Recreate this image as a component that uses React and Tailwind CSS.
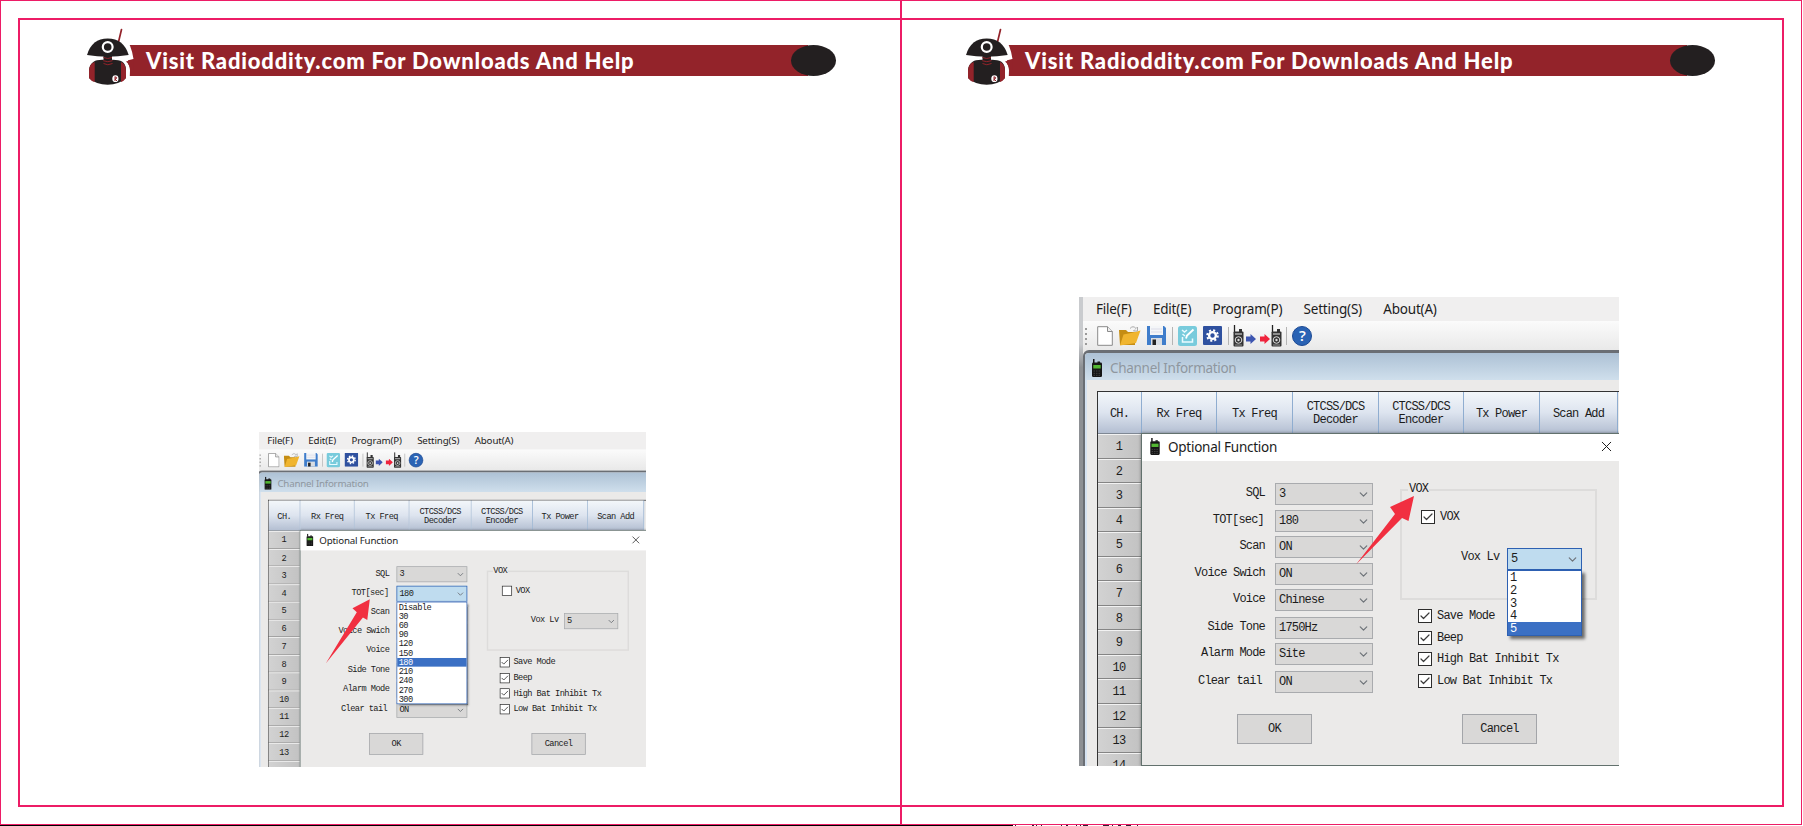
import { Check, ChevronDown, X } from "lucide-react";
import clsx from "clsx";

const menus = ["File(F)", "Edit(E)", "Program(P)", "Setting(S)", "About(A)"];

const columns = [
  { text: ["CH."], width: "w-[44px]" },
  { text: ["Rx Freq"], width: "w-[75px]" },
  { text: ["Tx Freq"], width: "w-[76px]" },
  { text: ["CTCSS/DCS", "Decoder"], width: "w-[86px]" },
  { text: ["CTCSS/DCS", "Encoder"], width: "w-[85px]" },
  { text: ["Tx Power"], width: "w-[76px]" },
  { text: ["Scan Add"], width: "w-[78px]" },
];

const fields = [
  { label: "SQL", value: "3", row: "h-[27px]", pad: "pr-[10px]" },
  { label: "TOT[sec]", value: "180", row: "h-[26px]", pad: "pr-[11px]" },
  { label: "Scan", value: "ON", row: "h-[27px]", pad: "pr-[10px]" },
  { label: "Voice Swich", value: "ON", row: "h-[26px]", pad: "pr-[10px]" },
  { label: "Voice", value: "Chinese", row: "h-[28px]", pad: "pr-[10px]" },
  { label: "Side Tone", value: "1750Hz", row: "h-[26px]", pad: "pr-[10px]" },
  { label: "Alarm Mode", value: "Site", row: "h-[28px]", pad: "pr-[10px]" },
  { label: "Clear tail", value: "ON", row: "h-[22px]", pad: "pr-[13px]" },
];

const totOptions = ["Disable", "30", "60", "90", "120", "150", "180", "210", "240", "270", "300"];
const voxOptions = ["1", "2", "3", "4", "5"];
const checks = ["Save Mode", "Beep", "High Bat Inhibit Tx", "Low Bat Inhibit Tx"];

const Robot = () => (
  <svg width="50" height="60" viewBox="0 0 50 60" className="relative shrink-0">
    <path d="M38 9 Q45 15 47.500 31 L39 33 Q44 36 44 42 L43.500 58 L30 58 L30 12Z" fill="#fff" />
    <path d="M40 33.500 L47.500 31.500 V42 H44 Q44 37 40 33.500Z" fill="#93232a" />
    <path d="M32.500 14 L35.500 1.500" stroke="#93232a" strokeWidth="1.700" strokeLinecap="round" />
    <path d="M1 27 Q6 10.600 21.700 10.600 Q37.500 10.600 42.700 27 Q32 28.800 21.700 28.800 Q11 28.800 1 27Z" fill="#231f20" />
    <circle cx="21.700" cy="19" r="4.900" fill="#231f20" stroke="#fff" strokeWidth="2.200" />
    <rect x="17.500" y="28" width="8.500" height="6" fill="#231f20" />
    <path d="M8 33.500 Q10 31.700 16 31.700 H27 Q33 31.700 36 33.500 Q40 36 40 42 V50 Q33 56.700 21.700 56.700 Q10 56.700 3 50 V42 Q3.500 36 8 33.500Z" fill="#231f20" />
    <path d="M8.700 34 Q3 36 3 43 V50 Q5 53 8.700 54Z M35 34 Q40 36 40 43 V50 Q38 53 35 54Z" fill="#93232a" />
    <path d="M17.500 29.500 Q21.700 31.500 26 29.500 M17.200 32.700 Q21.700 34.700 26.500 32.700 M17.500 35.500 Q21.700 38 26.500 35.500" stroke="#93232a" strokeWidth="1" fill="none" />
    <ellipse cx="29.400" cy="50.700" rx="3.100" ry="3.400" fill="#fff" />
    <path d="M29 48.500 V53 M29 49 Q31.500 49 30.500 50.500 L29 51 L31 53" stroke="#93232a" strokeWidth="1" fill="none" />
  </svg>
);

const Banner = () => (
  <header className="flex h-[60px] w-[751px] items-start">
    <Robot />
    <div className="-ml-[8px] mt-[17px] flex h-[31px] w-[680px] items-center bg-[#93232a] pl-[18px]">
      <h1 className="whitespace-nowrap font-['Lato'] text-[22px] font-black leading-[31px] tracking-[0.800px] text-white">
        Visit Radioddity.com For Downloads And Help
      </h1>
    </div>
    <div className="-ml-[17px] mt-[17px] h-[31px] w-[45px] shrink-0 rounded-[50%] bg-[#231f20]" />
  </header>
);

const Phone = ({ className }) => (
  <svg viewBox="0 0 10 18" className={className}>
    <path d="M1 0 H2.500 V4 H1Z M5.500 2.500 H8 V4 H5.500Z" fill="#111" />
    <rect x="0" y="3.500" width="10" height="14.500" rx="1.200" fill="#161616" />
    <rect x="1.300" y="6" width="7.400" height="3.500" fill="#53b833" />
    <path d="M1.500 12 H8.500 M1.500 14.300 H8.500 M1.500 16.300 H8.500" stroke="#555" strokeWidth=".7" strokeDasharray="1.500 1" />
  </svg>
);

const Handset = () => (
  <svg width="11" height="22" viewBox="0 0 11 22">
    <path d="M1.500 0 V8" stroke="#222" strokeWidth="1.300" />
    <path d="M6 4 H9 V7 H6Z" fill="#333" />
    <rect x=".5" y="6.500" width="10" height="15" rx="1" fill="#333" />
    <path d="M2 9 H9" stroke="#ccc" strokeWidth="1.200" />
    <circle cx="5.500" cy="15" r="3.300" fill="#333" stroke="#ddd" />
    <circle cx="5.500" cy="15" r="1.200" fill="#ddd" />
    <path d="M2 20 H9" stroke="#aaa" strokeWidth=".8" />
  </svg>
);

const Arrow = ({ className }) => (
  <svg width="10" height="10" viewBox="0 0 10 10" className={className}>
    <path d="M0 2.500 H4.500 V0 L10 5 L4.500 10 V7.500 H0Z" fill="currentColor" />
  </svg>
);

const Separator = ({ className }) => <span className={clsx("h-[18px] w-px bg-[#b4b4b4]", className)} />;

const Toolbar = () => (
  <div className="flex h-[29px] items-center bg-linear-to-b from-[#fbfbfb] to-[#e9e9e9] pl-[2px]">
    <svg width="3" height="18" viewBox="0 0 3 18">
      <path d="M1 1 V18" stroke="#9a9a9a" strokeWidth="2" strokeDasharray="2 3" />
    </svg>
    <svg width="16" height="20" viewBox="0 0 16 20" className="ml-[9px]">
      <path d="M.7 .7 H10.500 L15.300 5.500 V19.300 H.7Z" fill="#fff" stroke="#8a8a8a" />
      <path d="M10.500 .7 V5.500 H15.300" fill="#eee" stroke="#8a8a8a" />
    </svg>
    <svg width="22" height="21" viewBox="0 0 22 21" className="ml-[6px]">
      <path d="M0 5 H7 L9 7 H16 V20 H1Z" fill="#c58d13" />
      <path d="M4.500 9.500 L12 8 L21.500 5.500 L17 18 L1 20.500Z" fill="#f0b52f" />
      <path d="M11 3.500 Q14 0 17 3.500 L18.500 2 V6 H14.500 L16 4.500" fill="none" stroke="#aaa" />
    </svg>
    <svg width="19" height="19" viewBox="0 0 19 19" className="ml-[6px]">
      <path d="M0 0 H17 L19 2 V19 H0Z" fill="#3f7dcb" />
      <rect x="3" y="0" width="13" height="9" fill="#f4f6f8" />
      <path d="M4 3 H15 M4 6 H15" stroke="#ccd" strokeWidth=".6" />
      <rect x="4" y="12" width="11" height="7" fill="#d8dde3" />
      <rect x="5.500" y="13.500" width="3.500" height="5.500" fill="#222" />
    </svg>
    <Separator className="ml-[6px]" />
    <svg width="19" height="20" viewBox="0 0 19 20" className="ml-[5px]">
      <rect width="19" height="20" rx="2.500" fill="#78cbdc" />
      <path d="M4 4 L6.500 6 L9 4 M4.500 8 L7 10 M4.500 11 V16 H14.500 V12.500" fill="none" stroke="#e9fbff" strokeWidth="1.500" />
      <path d="M8 12.500 L9 9.500 L15.500 3.500" fill="none" stroke="#fff" strokeWidth="1.900" />
    </svg>
    <svg width="19" height="19" viewBox="0 0 19 19" className="ml-[6px]">
      <rect width="19" height="19" rx="1" fill="#2f519f" />
      <circle cx="9.500" cy="9.500" r="5.300" fill="none" stroke="#fff" strokeWidth="2" strokeDasharray="2.080 2.080" />
      <circle cx="9.500" cy="9.500" r="3.400" fill="none" stroke="#fff" strokeWidth="2.400" />
    </svg>
    <Separator className="ml-[6px]" />
    <span className="ml-[4px] flex items-center">
      <Handset />
      <Arrow className="ml-[2px] mt-[7px] text-[#3d55b0]" />
      <Arrow className="ml-[4px] mt-[6px] text-[#ef233c]" />
      <span className="ml-[1px]">
        <Handset />
      </span>
    </span>
    <Separator className="ml-[4px]" />
    <span className="ml-[5px] flex h-[20px] w-[20px] items-center justify-center rounded-full border border-[#1d4a94] bg-[#2a63b4] font-['Open_Sans'] text-[15px] font-semibold leading-none text-white">
      ?
    </span>
  </div>
);

const Options = ({ items, selected }) => (
  <ul className="absolute -left-px top-[21px] z-10 w-[calc(100%+2px)] border border-[#2d60b2] bg-white shadow-[3px_3px_3px_rgba(0,0,0,0.55)]">
    {items.map((item) => (
      <li
        key={item}
        className={clsx("h-[12.750px] pl-[2px] leading-[14px]", item === selected && "bg-[#3b70c4] text-white")}
      >
        {item}
      </li>
    ))}
  </ul>
);

const Select = ({ value, options, className }) => (
  <div
    className={clsx(
      "relative flex h-[22px] items-center justify-between border pl-[3px] pr-[2px]",
      options ? "border-[#2d60b2] bg-[#bfdcef]" : "border-[#a9abae] bg-[#d9d8d7]",
      className
    )}
  >
    <span>{value}</span>
    <ChevronDown size={13} strokeWidth={2.2} className="text-[#6d7278]" />
    {options && <Options items={options} selected={value} />}
  </div>
);

const CheckItem = ({ label, checked = true }) => (
  <div className="flex items-center gap-[5px]">
    <span className="flex h-[14px] w-[14px] items-center justify-center border border-[#2c2c2c] bg-white">
      {checked && <Check size={12} strokeWidth={2.4} className="text-[#3c3c3c]" />}
    </span>
    <span>{label}</span>
  </div>
);

const Button = ({ children }) => (
  <button className="h-[30px] w-[75px] border border-[#a3a5a9] bg-[#d9d8d7]">{children}</button>
);

const Dialog = ({ open, voxChecked }) => (
  <div className="absolute left-[62px] top-[136px] h-[333px] w-[490px] border border-[#62716d] bg-[#ebeae9] shadow-[0_0_3px_rgba(0,0,0,0.4)]">
    <div className="flex h-[27px] items-center bg-white pb-[2px] pl-[8px] font-['Noto_Sans'] text-[13.500px] tracking-[-0.250px]">
      <Phone className="h-[17px] w-[10px]" />
      <span className="ml-[8px] w-[432px]">Optional Function</span>
      <X size={17} strokeWidth={1.4} className="-ml-[2px]" />
    </div>
    <div className="flex pt-[22px]">
      <div className="w-[258px]">
        {fields.map(({ label, value, row, pad }) => (
          <div key={label} className={clsx("flex", row)}>
            <span className={clsx("w-[133px] text-right leading-[20px]", pad)}>{label}</span>
            <Select
              value={value}
              options={open === "tot" && label === "TOT[sec]" ? totOptions : null}
              className="w-[98px]"
            />
          </div>
        ))}
      </div>
      <div className="-mt-[2px] w-[197px]">
        <fieldset className="h-[119px] border-2 border-[#dddcdb] pl-[6px]">
          <legend className="h-[18px] px-[1px] leading-[17px]">VOX</legend>
          <div className="pl-[13px] pt-[9px]">
            <CheckItem label="VOX" checked={voxChecked} />
          </div>
          <div className="flex pl-[53px] pt-[22px]">
            <span className="w-[46px] leading-[18px]">Vox Lv</span>
            <Select value="5" options={open === "vox" ? voxOptions : null} className="w-[75px]" />
          </div>
        </fieldset>
        <div className="flex flex-col gap-[3.500px] pl-[18px] pt-[7px]">
          {checks.map((label) => (
            <CheckItem key={label} label={label} />
          ))}
        </div>
      </div>
    </div>
    <div className="flex gap-[150px] pl-[95px] pt-[21px]">
      <Button>OK</Button>
      <Button>Cancel</Button>
    </div>
  </div>
);

const ProgrammingApp = ({ open, voxChecked, arrow, className }) => (
  <div
    className={clsx(
      "relative flex h-[469px] overflow-hidden bg-[#ebeae9] font-['Liberation_Mono','Noto_Sans_CJK_SC',monospace] text-[12px] leading-[18px] tracking-[-0.800px] text-[#1c1c1c]",
      className
    )}
  >
    <div className="w-[4px] shrink-0 bg-linear-to-b from-[#c9cbce] from-10% to-[#8d9094] to-15%" />
    <div className="flex w-[540px] shrink-0 flex-col">
      <nav className="flex h-[24px] items-center gap-[21.300px] bg-[#f0efef] pl-[13px] font-['Noto_Sans'] text-[13.500px] tracking-[-0.200px]">
        {menus.map((menu) => (
          <span key={menu}>{menu}</span>
        ))}
      </nav>
      <Toolbar />
      <div className="h-[416px] rounded-tl-[6px] border-l-2 border-t-[3px] border-[#6a6e74]">
        <div className="flex h-[27px] items-center rounded-tl-[4px] bg-linear-to-b from-[#adc1d5] to-[#cfdfec] pl-[7px] pt-[2px] font-['Noto_Sans'] text-[13.500px] tracking-[-0.300px] text-[#8f979f]">
          <Phone className="h-[18px] w-[10px]" />
          <span className="ml-[8px]">Channel Information</span>
        </div>
        <div className="h-[386px] border-l-2 border-[#d5e2f1] pl-[10px] pt-[11px]">
          <div className="border-l border-t border-[#333]">
            <div className="flex h-[42px]">
              {columns.map(({ text, width }, index) => (
                <div
                  key={index}
                  className={clsx(
                    "flex shrink-0 flex-col items-center justify-center border-b border-r border-b-[#7f8894] border-r-[#8fadd0] bg-linear-to-b from-[#f3f7fa] via-[#dde4ef] to-[#b4bfd2] pt-[3px] leading-[13px]",
                    width
                  )}
                >
                  {text.map((line) => (
                    <span key={line}>{line}</span>
                  ))}
                </div>
              ))}
            </div>
            {Array.from({ length: 14 }, (_, i) => (
              <div
                key={i}
                className="flex h-[24.500px] w-[44px] items-center justify-center border-b border-t border-b-[#858585] border-t-[#f2f2f2] bg-linear-to-r from-[#d2d2d2] to-[#c2c2c2] pr-[2px] pt-[2px]"
              >
                {i + 1}
              </div>
            ))}
          </div>
        </div>
      </div>
    </div>
    <Dialog open={open} voxChecked={voxChecked} />
    <svg width="540" height="469" viewBox="0 0 540 469" className="pointer-events-none absolute left-0 top-0 z-20">
      <polygon points={arrow} fill="#f12f40" />
    </svg>
  </div>
);

// stray print marks that run along the bottom edge
const marks = [
  "ml-[2px] w-px",
  "ml-[16px] w-[2px]",
  "ml-[2px] w-px",
  "ml-[4px] w-px",
  "ml-[19px] w-px",
  "ml-[4px] w-[2px]",
  "ml-[8px] w-px",
  "ml-[3px] w-px",
  "ml-[2px] w-[5px]",
  "ml-[15px] w-[6px]",
  "ml-[3px] w-px",
  "ml-[5px] w-[3px]",
  "ml-[5px] w-[5px]",
  "ml-[6px] w-px",
];

export default function App() {
  return (
    <div className="h-[826px] w-[1803px] overflow-hidden bg-white">
      <main className="flex h-[825px] w-[1802px] border border-[#ed1c66]">
        <section className="w-[899px] shrink-0 py-[17px] pl-[17px]">
          <div className="h-full border-2 border-r-0 border-[#ed1c66] pl-[66px] pt-[8px]">
            <Banner />
            <div className="ml-[173px] mt-[344px] h-[335px] w-[387px] overflow-hidden">
              <div className="-ml-[4px] origin-top-left scale-[0.722]">
                <ProgrammingApp
                  open="tot"
                  voxChecked={false}
                  arrow="159,231.500 135,244 141,249.500 98,320.500 149.500,257 155.500,260.500"
                  className="w-[542px]"
                />
              </div>
            </div>
          </div>
        </section>
        <div className="w-[2px] shrink-0 bg-[#ed1c66]" />
        <section className="w-[899px] shrink-0 py-[17px] pr-[17px]">
          <div className="h-full border-2 border-l-0 border-[#ed1c66] pl-[63px] pt-[8px]">
            <Banner />
            <div className="ml-[114px] mt-[209px]">
              <ProgrammingApp
                open="vox"
                voxChecked
                arrow="335,199 311,210 316,217 277,267.500 323,221 329.500,224"
                className="w-[540px]"
              />
            </div>
          </div>
        </section>
      </main>
      <div className="flex h-px">
        <span className="w-[1013px] bg-black" />
        {marks.map((mark, i) => (
          <span key={i} className={clsx("bg-[#2b2233]", mark)} />
        ))}
      </div>
    </div>
  );
}
